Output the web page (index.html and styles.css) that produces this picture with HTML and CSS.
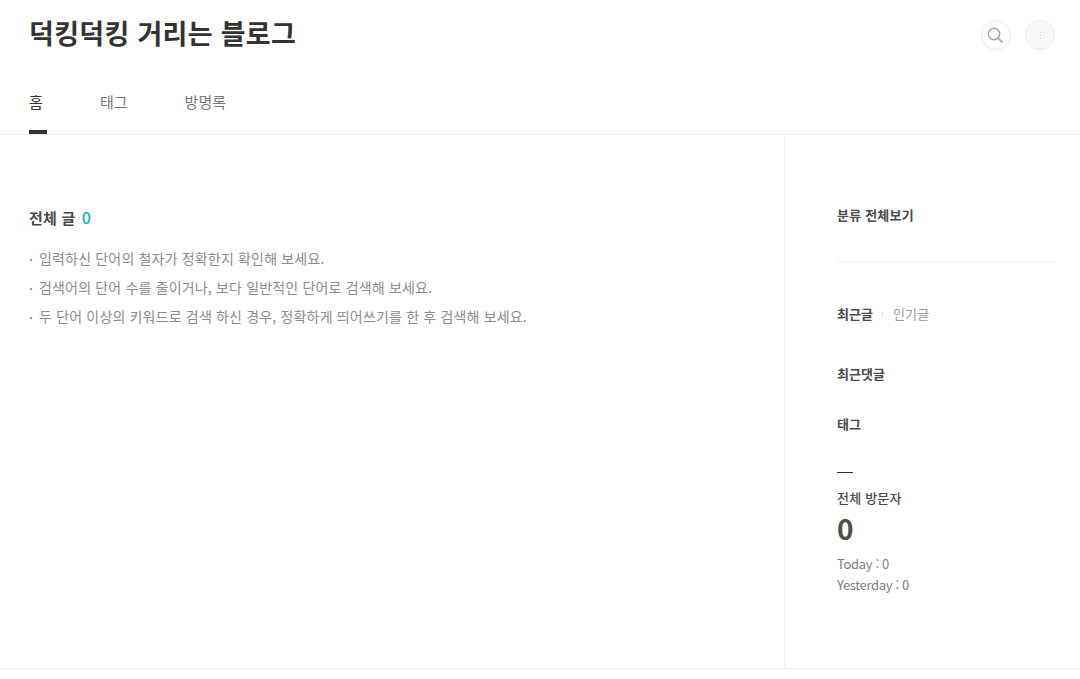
FILE: index.html
```html
<!DOCTYPE html>
<html lang="ko">
<head>
<meta charset="utf-8">
<title>덕킹덕킹 거리는 블로그</title>
<link rel="stylesheet" href="styles.css">
</head>
<body>
<header class="header">
  <div class="top">
    <h1 class="title">덕킹덕킹 거리는 블로그</h1>
    <div class="actions">
      <span class="circle">
        <svg width="18" height="18" viewBox="0 0 18 18" fill="none"><circle cx="7" cy="8" r="5.7" stroke="#a3a3a3" stroke-width="1.4"/><path d="M11 12 15.4 16.4" stroke="#a3a3a3" stroke-width="1.6"/></svg>
      </span>
      <span class="circle avatar">
        <svg width="7" height="7" viewBox="0 0 7 7"><path d="M0 0h1v1H0zM3 0h1v1H3zM6 0h1v1H6zM3 3h1v1H3zM3 6h1v1H3z" fill="#ddd"/></svg>
      </span>
    </div>
  </div>
  <nav class="nav">
    <a class="nav-item active">홈</a>
    <a class="nav-item">태그</a>
    <a class="nav-item">방명록</a>
  </nav>
</header>
<div class="layout">
  <main class="main">
    <h2 class="heading">전체 글 <span class="count">0</span></h2>
    <ul class="tips">
      <li>입력하신 단어의 철자가 정확한지 확인해 보세요.</li>
      <li>검색어의 단어 수를 줄이거나, 보다 일반적인 단어로 검색해 보세요.</li>
      <li>두 단어 이상의 키워드로 검색 하신 경우, 정확하게 띄어쓰기를 한 후 검색해 보세요.</li>
    </ul>
  </main>
  <aside class="side">
    <div class="category">분류 전체보기</div>
    <div class="tabs"><b>최근글</b><i class="sep"></i><span>인기글</span></div>
    <div class="label comments">최근댓글</div>
    <div class="label tags">태그</div>
    <div class="visitors">
      <div class="rule"></div>
      <div class="label medium">전체 방문자</div>
      <div class="total">0</div>
      <div class="stat">Today : 0</div>
      <div class="stat">Yesterday : 0</div>
    </div>
  </aside>
</div>
</body>
</html>
```
FILE: styles.css
```css
* { box-sizing: border-box; }
html, body { margin: 0; padding: 0; background: #fff; }
body {
  height: 679px;
  overflow: hidden;
  font-family: "Noto Sans CJK KR", "Noto Sans", sans-serif;
  color: #333;
}
.header { height: 135px; border-bottom: 1px solid #eee; padding: 0 25px 0 29px; display: flex; flex-direction: column; }
.top { display: flex; justify-content: space-between; align-items: flex-start; height: 79px; }
.title { margin: 12px 0 0; font-size: 27px; line-height: 42px; font-weight: 700; color: #333; letter-spacing: 0.3px; }
.actions { display: flex; gap: 14px; margin-top: 20px; }
.circle { width: 30px; height: 30px; border-radius: 50%; border: 1px solid #eaeaea; display: flex; align-items: center; justify-content: center; background: #fff; }
.avatar { background: #f9f9f9; }
.nav { display: flex; gap: 57px; flex: 1; }
.nav-item { font-size: 15px; line-height: 20px; padding-top: 13px; color: #777; height: 55px; }
.nav-item.active { color: #333; border-bottom: 4px solid #333; width: 18px; white-space: nowrap; margin-right: -4px; }
.layout { display: flex; height: 534px; border-bottom: 1px solid #eee; }
.main { width: 784px; padding: 71px 29px 0; }
.heading { margin: 0; font-size: 15px; line-height: 22px; font-weight: 700; color: #4a4a4a; letter-spacing: 0.2px; }
.count { color: #00bcc0; margin-left: 2px; font-size: 16px; font-weight: 500; }
.tips { list-style: none; margin: 15px 0 0; padding: 0; font-size: 14px; line-height: 29px; color: #8c8c8c; letter-spacing: 0.17px; }
.tips li { padding-left: 10px; position: relative; }
.tips li::before { content: ""; position: absolute; left: 1px; top: 15px; width: 2px; height: 2px; background: #999; }
.side { flex: 1; border-left: 1px solid #eee; padding: 69px 25px 0 52px; }
.category { font-size: 13px; line-height: 22px; font-weight: 700; color: #4a4a4a; padding-bottom: 35px; border-bottom: 1px solid #eee; letter-spacing: 0.2px; }
.tabs { margin-top: 41px; font-size: 13px; line-height: 22px; display: flex; align-items: center; color: #999; letter-spacing: 0.2px; }
.tabs b { font-weight: 700; color: #4a4a4a; letter-spacing: 0; }
.sep { width: 1px; height: 5px; margin: 1px 9.5px 0; background: #e2e2e2; }
.label { font-size: 13px; line-height: 22px; font-weight: 700; color: #4a4a4a; }
.label.medium { font-weight: 500; letter-spacing: 0.2px; }
.comments { margin-top: 38px; }
.tags { margin-top: 28px; }
.visitors { margin-top: 37px; }
.rule { width: 16px; height: 1px; background: #333; margin-bottom: 14px; }
.total { font-size: 28px; line-height: 40px; font-weight: 700; color: #4f4f4f; margin-top: -1px; }
.stat { font-size: 13px; line-height: 21px; color: #7d7d7d; letter-spacing: -0.35px; }
.total + .stat { margin-top: 5px; }
```
